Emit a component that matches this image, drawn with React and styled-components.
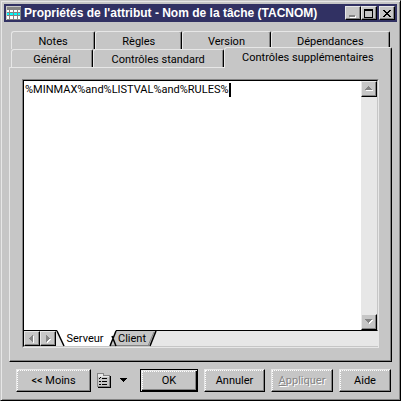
import React, { useState } from "react";
import styled, { createGlobalStyle, css } from "styled-components";

const GlobalStyle = createGlobalStyle`
  * {
    box-sizing: border-box;
  }

  body {
    margin: 0;
    background: #c6c6c6;
  }

  body, button, textarea {
    font-family: Roboto, Arial, sans-serif;
    font-size: 11px;
    line-height: 14px;
    color: #000000;
  }
`;

const raised = css`
  background: #c6c6c6;
  border: 1px solid;
  border-color: #e7e7e7 #000000 #000000 #e7e7e7;
  box-shadow: inset -1px -1px 0 #848484;
`;

const Window = styled.div`
  display: flex;
  flex-direction: column;
  min-height: 100vh;
  padding: 3px 2px 8px 3px;
  background: #c6c6c6;
  border: 1px solid;
  border-color: #c6c6c6 #000000 #000000 #c6c6c6;
  box-shadow: inset 1px 1px 0 #e7e7e7, inset -1px -1px 0 #848484;
`;

const TitleBar = styled.header`
  display: flex;
  align-items: center;
  gap: 3px;
  height: 18px;
  margin-right: 1px;
  padding: 0 2px;
  background: #313163;
  color: #ffffff;
`;

const Title = styled.h1`
  flex: 1;
  margin: 0;
  font-family: "Liberation Sans", Arial, sans-serif;
  font-size: 12px;
  line-height: 16px;
  font-weight: bold;
  white-space: nowrap;
`;

const WindowButtons = styled.div`
  display: flex;
`;

const WindowButton = styled.button`
  ${raised}
  display: flex;
  align-items: center;
  justify-content: center;
  width: 16px;
  height: 14px;
  padding: 0;
  margin-left: ${(props) => (props.$apart ? "2px" : "0")};
`;

const Tabs = styled.div`
  display: flex;
  flex-direction: column;
  flex: 1;
  margin: 9px 6px 0 5px;
`;

const TabRow = styled.div`
  display: flex;
  height: 18px;
  padding: 0 ${(props) => (props.$front ? "0" : "2px")} 0 2px;
`;

const Tab = styled.button`
  ${raised}
  position: relative;
  flex: ${(props) => props.$grow} 1 0;
  min-width: 0;
  padding: 2px 0 0;
  border-bottom: none;
  border-radius: 3px 2px 0 0;
  box-shadow: inset -1px 0 0 #848484;
  white-space: nowrap;

  ${(props) =>
    props.$active &&
    css`
      z-index: 1;
      margin: -2px 0 -1px;
      padding-bottom: 3px;
    `}
`;

const Panel = styled.div`
  ${raised}
  display: flex;
  flex-direction: column;
  flex: 1;
  padding: 11px 12px 13px;
`;

const Editor = styled.div`
  display: flex;
  flex-direction: column;
  flex: 1;
  background: #e7e7e7;
  border: 1px solid;
  border-color: #848484 #e7e7e7 #e7e7e7 #848484;
`;

const EditorBody = styled.div`
  position: relative;
  display: flex;
  flex: 1;
  border: 1px solid #000000;
  border-right-color: #c6c6c6;
`;

const Code = styled.textarea`
  flex: 1;
  min-width: 0;
  padding: 2px 1px;
  background: #ffffff;
  border: none;
  outline: none;
  resize: none;
  overflow: hidden;
  caret-color: transparent;
`;

const Caret = styled.span`
  position: absolute;
  top: 2px;
  left: 205px;
  width: 2px;
  height: 14px;
  background: #000000;
`;

const ScrollBar = styled.div`
  display: flex;
  flex-direction: column;
  justify-content: space-between;
  width: 16px;
  background: #e7e7e7;
`;

const ArrowButton = styled.button`
  ${raised}
  display: flex;
  align-items: center;
  justify-content: center;
  width: 16px;
  height: ${(props) => (props.$flat ? "15px" : "16px")};
  padding: 0;
`;

const SheetBar = styled.div`
  display: flex;
  height: 16px;
  border-left: 1px solid #000000;
  border-bottom: 1px solid #c6c6c6;
`;

const Sheet = styled.button`
  position: relative;
  z-index: ${(props) => (props.$active ? 1 : 0)};
  width: ${(props) => (props.$active ? "54px" : "46px")};
  padding: ${(props) => (props.$active ? "0 0 0 4px" : "0 2px 0 0")};
  background: none;
  border: none;
`;

const SheetShape = styled.svg`
  position: absolute;
  top: 0;
  left: 0;
  overflow: visible;
`;

const SheetLabel = styled.span`
  position: relative;
`;

const Footer = styled.footer`
  display: flex;
  align-items: center;
  gap: 6px;
  margin: 7px 7px 0 12px;
`;

const Tools = styled.div`
  display: flex;
  flex: 1;
  align-items: center;
`;

const ToolButton = styled.button`
  display: flex;
  align-items: center;
  gap: 9px;
  padding: 0;
  background: none;
  border: none;
`;

const PushButton = styled.button`
  ${raised}
  position: relative;
  width: ${(props) => props.$width};
  height: 23px;
  padding: 0;

  &::before {
    content: "";
    position: absolute;
    inset: 0 1px 1px 0;
    border-top: 1px dotted #ffffff;
    border-left: 1px dotted #ffffff;
  }

  ${(props) =>
    props.$primary &&
    css`
      border-color: #000000;
      box-shadow: inset 1px 1px 0 #e7e7e7, inset -1px -1px 0 #000000,
        inset -2px -2px 0 #848484;

      &::before {
        inset: 1px 2px 2px 1px;
      }
    `}

  &:disabled {
    color: #848484;
    text-shadow: 1px 1px 0 #ffffff;
  }
`;

const AppIcon = () => (
  <svg width="15" height="14" viewBox="0 0 15 14" shapeRendering="crispEdges">
    <path fill="#848484" d="M0 0h15v14H0z" />
    <path fill="#c6c6c6" d="M0 0h15v1H0zM0 1h1v13H0z" />
    <path
      fill="#ffffff"
      d="M1 4h2v2H1zM4 4h3v2H4zM8 4h3v2H8zM12 4h2v2h-2zM1 10h2v3H1zM4 10h3v3H4zM8 10h3v3H8zM12 10h2v3h-2z"
    />
    <path fill="#00ffff" d="M1 7h2v2H1zM4 7h3v2H4zM8 7h3v2H8zM12 7h2v2h-2z" />
  </svg>
);

const arrows = {
  up: "M3 1h1v1h1v1h1v1h1v1H0V4h1V3h1V2h1z",
  down: "M0 1h7v1H6v1H5v1H4v1H3V4H2V3H1V2H0z",
  left: "M4 0h1v7H4V6H3V5H2V4H1V3h1V2h1V1h1z",
  right: "M2 0h1v1h1v1h1v1h1v1H5v1H4v1H3v1H2z",
};

const Arrow = ({ to, color = "#848484" }) => (
  <svg width="8" height="8" viewBox="0 0 8 8" shapeRendering="crispEdges">
    {color === "#848484" && (
      <path fill="#ffffff" transform="translate(1 1)" d={arrows[to]} />
    )}
    <path fill={color} d={arrows[to]} />
  </svg>
);

const ListIcon = () => (
  <svg width="14" height="15" viewBox="0 0 14 15" shapeRendering="crispEdges">
    <path fill="#848484" d="M0 0h7v2h6v12H0z" />
    <path fill="#e7e7e7" d="M1 1h5v2h6v1H1z" />
    <path fill="#c6c6c6" d="M1 4h11v9H1z" />
    <path fill="#000000" d="M13 3h1v12H1v-1h12z" />
    <path
      fill="#000000"
      d="M2 5h1v1H2zM3 4h1v1H3zM2 8h2v1H2zM2 11h2v1H2zM5 5h5v1H5zM5 8h5v1H5zM5 11h5v1H5z"
    />
  </svg>
);

const backTabs = [
  { name: "Notes", grow: 84 },
  { name: "Règles", grow: 87 },
  { name: "Version", grow: 88 },
  { name: "Dépendances", grow: 120 },
];

const frontTabs = [
  { name: "Général", grow: 81 },
  { name: "Contrôles standard", grow: 131 },
  { name: "Contrôles supplémentaires", grow: 169 },
];

const App = () => {
  const [tab, setTab] = useState("Contrôles supplémentaires");
  const [code, setCode] = useState("%MINMAX%and%LISTVAL%and%RULES%");

  const renderTab = ({ name, grow }) => (
    <Tab
      key={name}
      role="tab"
      aria-selected={tab === name}
      $grow={grow}
      $active={tab === name}
      onClick={() => setTab(name)}
    >
      {name}
    </Tab>
  );

  return (
    <>
      <GlobalStyle />
      <Window>
        <TitleBar>
          <AppIcon />
          <Title>Propriétés de l'attribut - Nom de la tâche (TACNOM)</Title>
          <WindowButtons>
            <WindowButton aria-label="Réduire">
              <svg width="10" height="9" shapeRendering="crispEdges">
                <path fill="#ffffff" d="M2 8h6v1H2zM7 7h1v1H7z" />
                <path fill="#848484" d="M1 6h6v2H1z" />
              </svg>
            </WindowButton>
            <WindowButton aria-label="Agrandir">
              <svg width="10" height="9" shapeRendering="crispEdges">
                <path
                  fill="#000000"
                  fillRule="evenodd"
                  d="M0 0h9v9H0zM1 2v6h7V2z"
                />
              </svg>
            </WindowButton>
            <WindowButton $apart aria-label="Fermer">
              <svg width="8" height="7" shapeRendering="crispEdges">
                <path
                  fill="#000000"
                  d="M0 0h2v1h1v1h2V1h1V0h2v1H7v1H6v1H5v1h1v1h1v1h1v1H6V6H5V5H3v1H2v1H0V6h1V5h1V4h1V3H2V2H1V1H0z"
                />
              </svg>
            </WindowButton>
          </WindowButtons>
        </TitleBar>

        <Tabs>
          <TabRow role="tablist">{backTabs.map(renderTab)}</TabRow>
          <TabRow role="tablist" $front>
            {frontTabs.map(renderTab)}
          </TabRow>
          <Panel role="tabpanel">
            <Editor>
              <EditorBody>
                <Code
                  aria-label="Contrôles supplémentaires"
                  spellCheck={false}
                  value={code}
                  onChange={(e) => setCode(e.target.value)}
                />
                <Caret />
                <ScrollBar>
                  <ArrowButton aria-label="Défiler vers le haut">
                    <Arrow to="up" />
                  </ArrowButton>
                  <ArrowButton aria-label="Défiler vers le bas">
                    <Arrow to="down" />
                  </ArrowButton>
                </ScrollBar>
              </EditorBody>
              <SheetBar>
                <ArrowButton $flat aria-label="Précédent">
                  <Arrow to="left" />
                </ArrowButton>
                <ArrowButton $flat aria-label="Suivant">
                  <Arrow to="right" />
                </ArrowButton>
                <Sheet $active>
                  <SheetShape width="60" height="15">
                    <path fill="#ffffff" d="M1-1h59l-6 16H8z" />
                    <path
                      fill="none"
                      stroke="#000000"
                      strokeWidth="1.5"
                      d="M1 0l7 15M54 15l6-15M56 5l4 10"
                    />
                  </SheetShape>
                  <SheetLabel>Serveur</SheetLabel>
                </Sheet>
                <Sheet>
                  <SheetShape width="46" height="15">
                    <path fill="#c6c6c6" d="M6 0h40l-6 15H0z" />
                    <path fill="#848484" d="M0 14h39v1H0z" />
                    <path fill="none" stroke="#848484" d="M44 1l-6 14" />
                    <path
                      fill="none"
                      stroke="#000000"
                      strokeWidth="1.5"
                      d="M46 0l-6 15"
                    />
                  </SheetShape>
                  <SheetLabel>Client</SheetLabel>
                </Sheet>
              </SheetBar>
            </Editor>
          </Panel>
        </Tabs>

        <Footer>
          <PushButton $width="75px">&lt;&lt; Moins</PushButton>
          <Tools>
            <ToolButton aria-label="Menu">
              <ListIcon />
              <Arrow to="down" color="#000000" />
            </ToolButton>
          </Tools>
          <PushButton $width="58px" $primary>
            OK
          </PushButton>
          <PushButton $width="61px">Annuler</PushButton>
          <PushButton $width="62px" disabled>
            <u>A</u>ppliquer
          </PushButton>
          <PushButton $width="52px">Aide</PushButton>
        </Footer>
      </Window>
    </>
  );
};

export default App;
